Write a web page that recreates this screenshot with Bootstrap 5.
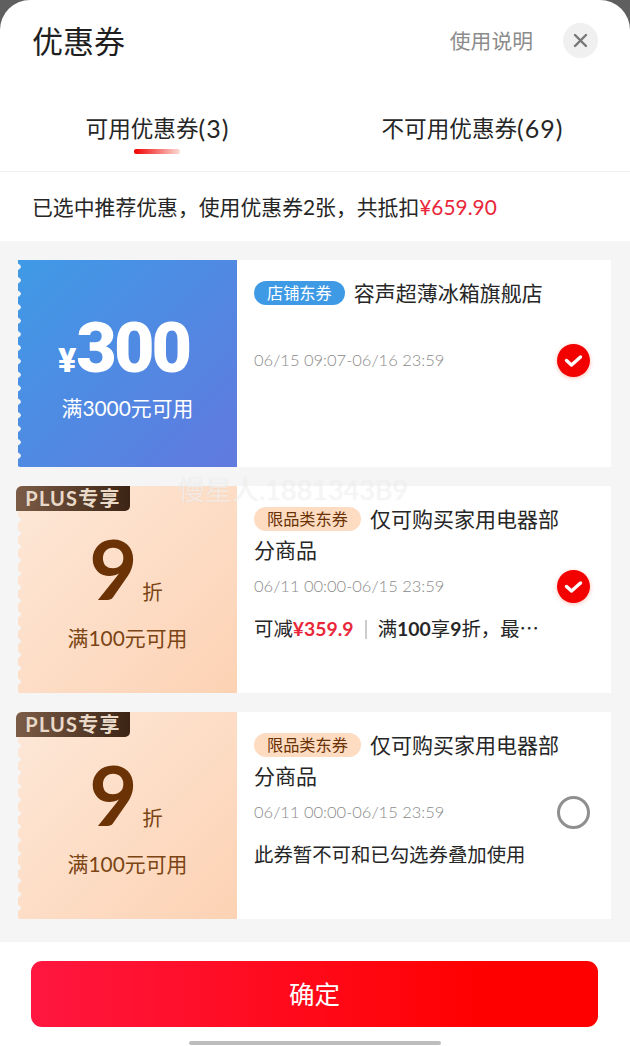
<!DOCTYPE html>
<html lang="zh-CN">
<head>
    <meta charset="UTF-8">
    <title>优惠券</title>
    <meta name="viewport" content="width=device-width, initial-scale=1">
    <link href="https://cdn.jsdelivr.net/npm/bootstrap@5.3.3/dist/css/bootstrap.min.css" rel="stylesheet">
    <style>
        html, body { height: 100%; }
        body {
            background: #5f5f5f;
            font-family: Lato, "Noto Sans CJK SC", sans-serif;
            color: #262626;
            overflow: hidden;
        }
        .sheet { width: 630px; height: 1046px; background: #fff; border-radius: 30px 30px 0 0; overflow: hidden; position: relative; }
        .sheet-head { height: 85px; padding: 0 32px; }
        .sheet-title { font-size: 31px; line-height: 42px; margin-top: 20px; color: #1f1f1f; }
        .head-right { margin-top: 23px; }
        .help-text { font-size: 20.8px; color: #8c8c8c; margin-right: 30px; margin-top: 1px; }
        .close-btn { width: 35px; height: 35px; border-radius: 50%; background: #f0f0f0; }
        .tab-row { height: 87px; border-bottom: 1px solid #f2f2f2; }
        .tab-item { width: 315px; font-size: 22.6px; line-height: 30px; padding-top: 29px; text-align: center; position: relative; }
        .tab-count { font-size: 25px; letter-spacing: 1px; line-height: 1; display: inline-block; vertical-align: -1px; }
        .tab-line { position: absolute; left: 134px; top: 64px; width: 46px; height: 5px; background: linear-gradient(90deg, #f00000, #fbdcd6); border-radius: 2px; }
        .info-row { height: 69px; padding: 0 32px; font-size: 20.85px; line-height: 69px; }
        .price-red { color: #e8283a; }
        .coupon-area { height: 701px; background: #f5f5f5; padding: 19px 19px 0 18px; }
        .coupon { height: 207px; margin-bottom: 19px; background: #fff; }
        .coupon-left { width: 219px; position: relative; text-align: center; flex-shrink: 0; }
        .coupon-left::before {
            content: ""; position: absolute; left: 0; top: 0; bottom: 0; width: 3px;
            background: radial-gradient(circle at 0 50%, #f5f5f5 2.5px, transparent 3px) 0 0 / 3px 13.5px repeat-y;
        }
        .left-blue { background: linear-gradient(135deg, #3f9ae6, #6179df); color: #fff; }
        .left-peach { background: linear-gradient(135deg, #fde8d8, #fdd2b4); color: #7a4413; }
        .amount-row { padding: 50px 8px 0 0; height: 113px; line-height: 76px; }
        .yen-sign { font-family: Roboto, sans-serif; font-weight: 900; font-size: 34px; }
        .amount-num { font-family: Roboto, sans-serif; font-weight: 900; font-size: 70px; letter-spacing: -3px; }
        .cond-text { font-size: 20.9px; line-height: 30px; margin-top: 20px; }
        .plus-tag {
            position: absolute; left: -2px; top: 0; width: 114px; height: 25px;
            background: linear-gradient(90deg, #7b5c47, #3c2414); color: #e8d9c9;
            border-radius: 6px 0 5px 0; font-size: 20px; line-height: 25px; font-weight: 700; letter-spacing: 1.2px;
        }
        .rate-row { padding: 38px 0 0 0; height: 125px; line-height: 89px; }
        .rate-num { font-weight: 700; font-size: 83px; color: #6b3205; margin-left: -3px; }
        .rate-unit { font-size: 20.5px; margin-left: 5px; }
        .coupon-left .rate-cond { margin-top: 12px; }
        .coupon-main { padding: 17px 36px 0 17px; min-width: 0; position: relative; }
        .coupon-title { font-size: 21px; line-height: 31px; }
        .title-tall { min-height: 62px; }
        .type-badge { display: block; font-size: 16.2px; line-height: 24px; border-radius: 12px; padding: 0 13px; margin-right: 9px; }
        .badge-blue { background: #3f9ae6; color: #fff; }
        .badge-peach { background: #fddcc2; color: #6b3205; }
        .date-row { height: 33px; margin-top: 5px; font-size: 16.5px; font-weight: 300; color: #8a8a8a; line-height: 33px; margin-right: -15px; }
        .check-on { filter: drop-shadow(0 1px 2px rgba(240, 60, 40, .35)); }
        .note-row { margin-top: 9px; font-size: 19.4px; line-height: 33px; }
        .note-row b { font-weight: 700; color: #e8283a; }
        .note-digit { font-weight: 700; }
        .note-sep { display: inline-block; width: 2px; height: 19px; background: #ccc; margin: 0 11px; vertical-align: -3px; }
        .sheet-foot { height: 104px; padding: 19px 32px 0 31px; position: relative; }
        .ok-btn, .ok-btn:hover {
            width: 567px; height: 66px; border-radius: 11px; border: 0;
            background: linear-gradient(90deg, #ff1740, #ff0000 80%); color: #fff;
            font-size: 25.5px; line-height: 66px; padding: 0;
        }
        .home-bar { position: absolute; left: 189px; bottom: 1px; width: 252px; height: 4px; background: #bdbdbd; border-radius: 2px; }
        .watermark {
            position: absolute; left: 178px; top: 472px; font-size: 27px; line-height: 36px;
            color: rgba(255, 255, 255, .6); text-shadow: 0 0 1px rgba(0, 0, 0, .1);
            pointer-events: none; white-space: nowrap;
        }
    </style>
</head>
<body>

<div class="sheet">
    <div class="sheet-head d-flex justify-content-between align-items-start">
        <div class="sheet-title">优惠券</div>
        <div class="head-right d-flex align-items-center">
            <span class="help-text">使用说明</span>
            <span class="close-btn d-flex align-items-center justify-content-center">
                <svg width="15" height="15" viewBox="0 0 15 15"><path d="M2 2L13 13M13 2L2 13" stroke="#777" stroke-width="2.4" stroke-linecap="round"/></svg>
            </span>
        </div>
    </div>

    <div class="tab-row d-flex">
        <div class="tab-item">可用优惠券<span class="tab-count">(3)</span><span class="tab-line"></span></div>
        <div class="tab-item">不可用优惠券<span class="tab-count">(69)</span></div>
    </div>

    <div class="info-row">已选中推荐优惠，使用优惠券2张，共抵扣<span class="price-red">¥659.90</span></div>

    <div class="coupon-area">
        <!-- 店铺东券 -->
        <div class="coupon d-flex">
            <div class="coupon-left left-blue">
                <div class="amount-row"><span class="yen-sign">¥</span><span class="amount-num">300</span></div>
                <div class="cond-text">满3000元可用</div>
            </div>
            <div class="coupon-main flex-grow-1">
                <div class="coupon-title title-tall"><div class="d-flex align-items-center"><span class="type-badge badge-blue">店铺东券</span><span>容声超薄冰箱旗舰店</span></div></div>
                <div class="date-row d-flex justify-content-between align-items-center">
                    <span>06/15 09:07-06/16 23:59</span>
                    <svg class="check-on" width="33" height="33" viewBox="0 0 33 33"><circle cx="16.5" cy="16.5" r="16.5" fill="#f30000"/><path d="M9.5 16.5l5 4.5 9-8" fill="none" stroke="#fff" stroke-width="3.4" stroke-linecap="round" stroke-linejoin="round"/></svg>
                </div>
            </div>
        </div>

        <!-- 限品类 -->
        <div class="coupon d-flex">
            <div class="coupon-left left-peach">
                <div class="plus-tag">PLUS专享</div>
                <div class="rate-row"><span class="rate-num">9</span><span class="rate-unit">折</span></div>
                <div class="cond-text rate-cond">满100元可用</div>
            </div>
            <div class="coupon-main flex-grow-1">
                <div class="coupon-title"><div class="d-flex align-items-center"><span class="type-badge badge-peach">限品类东券</span><span>仅可购买家用电器部</span></div><div>分商品</div></div>
                <div class="date-row d-flex justify-content-between align-items-center">
                    <span>06/11 00:00-06/15 23:59</span>
                    <svg class="check-on" width="33" height="33" viewBox="0 0 33 33"><circle cx="16.5" cy="16.5" r="16.5" fill="#f30000"/><path d="M9.5 16.5l5 4.5 9-8" fill="none" stroke="#fff" stroke-width="3.4" stroke-linecap="round" stroke-linejoin="round"/></svg>
                </div>
                <div class="note-row">可减<b>¥359.9</b><span class="note-sep"></span>满<span class="note-digit">100</span>享<span class="note-digit">9</span>折，最⋯</div>
            </div>
        </div>

        <div class="coupon d-flex">
            <div class="coupon-left left-peach">
                <div class="plus-tag">PLUS专享</div>
                <div class="rate-row"><span class="rate-num">9</span><span class="rate-unit">折</span></div>
                <div class="cond-text rate-cond">满100元可用</div>
            </div>
            <div class="coupon-main flex-grow-1">
                <div class="coupon-title"><div class="d-flex align-items-center"><span class="type-badge badge-peach">限品类东券</span><span>仅可购买家用电器部</span></div><div>分商品</div></div>
                <div class="date-row d-flex justify-content-between align-items-center">
                    <span>06/11 00:00-06/15 23:59</span>
                    <svg width="33" height="33" viewBox="0 0 33 33"><circle cx="16.5" cy="16.5" r="15" fill="#fff" stroke="#8f8f8f" stroke-width="3"/></svg>
                </div>
                <div class="note-row">此券暂不可和已勾选券叠加使用</div>
            </div>
        </div>
    </div>

    <div class="sheet-foot">
        <button type="button" class="btn ok-btn">确定</button>
        <div class="home-bar"></div>
    </div>

    <div class="watermark">慢星人.1881343B9</div>
</div>

<script src="https://cdn.jsdelivr.net/npm/bootstrap@5.3.3/dist/js/bootstrap.bundle.min.js"></script>
</body>
</html>
